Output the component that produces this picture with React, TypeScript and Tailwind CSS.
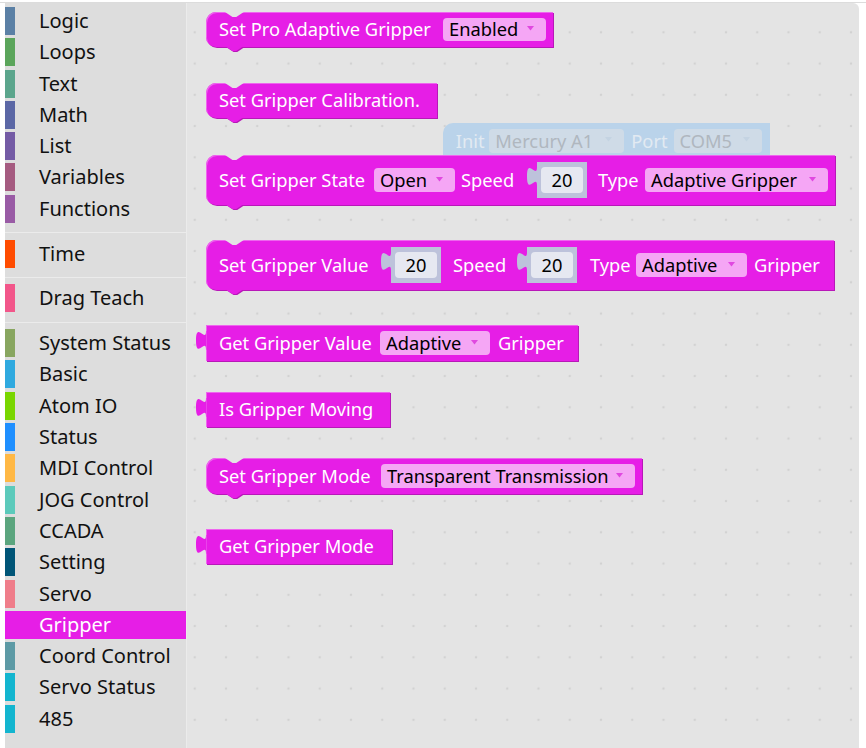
import React from "react";

type Item = { name: string; bar: string; selected?: boolean };

const sections: Item[][] = [
  [
    { name: "Logic", bar: "bg-[#5b80a5]" },
    { name: "Loops", bar: "bg-[#5ba55b]" },
    { name: "Text", bar: "bg-[#5ba58c]" },
    { name: "Math", bar: "bg-[#5b67a5]" },
    { name: "List", bar: "bg-[#745ba5]" },
    { name: "Variables", bar: "bg-[#a55b80]" },
    { name: "Functions", bar: "bg-[#995ba5]" },
  ],
  [{ name: "Time", bar: "bg-[#ff4c00]" }],
  [{ name: "Drag Teach", bar: "bg-[#f2568a]" }],
  [
    { name: "System Status", bar: "bg-[#88a660]" },
    { name: "Basic", bar: "bg-[#2fa9df]" },
    { name: "Atom IO", bar: "bg-[#79d600]" },
    { name: "Status", bar: "bg-[#1f8fff]" },
    { name: "MDI Control", bar: "bg-[#ffb845]" },
    { name: "JOG Control", bar: "bg-[#5ccabb]" },
    { name: "CCADA", bar: "bg-[#5ba57e]" },
    { name: "Setting", bar: "bg-[#005577]" },
    { name: "Servo", bar: "bg-[#ef7d8a]" },
    { name: "Gripper", bar: "bg-[#e61ee6]", selected: true },
    { name: "Coord Control", bar: "bg-[#5d9aa5]" },
    { name: "Servo Status", bar: "bg-[#13b5cf]" },
    { name: "485", bar: "bg-[#13b5cf]" },
  ],
];

function Sidebar() {
  return (
    <div className="w-[182px] shrink-0 h-full bg-[#dddddd] border-r border-[#ebebeb] pt-[4px] flex flex-col">
      {sections.map((sec, si) => (
        <div key={si} className="flex flex-col">
          {si > 0 && <div className="h-px bg-[#ebebeb] mt-[6px] mb-[6.5px]" />}
          {sec.map((it) => (
            <div
              key={it.name}
              className={`flex h-[28px] items-center mb-[3.3px] ${
                it.selected ? "bg-[#e61ee6] text-white" : "text-[#111111]"
              }`}
            >
              <div className={`w-[10px] h-full shrink-0 ${it.bar}`} />
              <span className="ml-[24px] text-[20px] leading-none whitespace-nowrap">{it.name}</span>
            </div>
          ))}
        </div>
      ))}
    </div>
  );
}

function Arrow({ color }: { color: string }) {
  return (
    <svg width="7" height="5" viewBox="0 0 7 5" className="ml-auto mr-[12px] shrink-0 -mt-[2px]">
      <path d="M0 0 L7 0 L3.5 4.5 Z" fill={color} />
    </svg>
  );
}

function Dropdown({ w, text }: { w: string; text: string }) {
  return (
    <div className={`h-[23.5px] shrink-0 rounded-[4px] bg-[#f5a6f5] flex items-center pl-[6px] ${w}`}>
      <span className="text-black whitespace-nowrap">{text}</span>
      <Arrow color="#e048e0" />
    </div>
  );
}

function Tab({ color, className }: { color: string; className: string }) {
  return (
    <svg width="10" height="19" viewBox="0 0 10 19" overflow="visible" className={`absolute ${className}`}>
      <path d="M10.5 0 L10 0 C10 12.5 0 -10 0 9.375 S10 6.25 10 18.75 L10.5 18.75 Z" fill={color} />
    </svg>
  );
}

function NumSocket({ v }: { v: string }) {
  return (
    <div className="relative w-[50px] h-[36px] shrink-0 bg-[#bdc2db] flex items-center justify-center">
      <Tab color="#bdc2db" className="-left-[10px] top-[5px]" />
      <div className="w-[42px] h-[26px] rounded-[4px] bg-[#e6e8f1] text-black flex items-center justify-center">
        {v}
      </div>
    </div>
  );
}

function Label({ w, children }: { w: string; children: React.ReactNode }) {
  return <span className={`shrink-0 whitespace-nowrap ${w}`}>{children}</span>;
}

function Block({
  className,
  kind,
  children,
}: {
  className: string;
  kind: "stmt" | "output";
  children: React.ReactNode;
}) {
  return (
    <div
      className={`relative flex items-center shrink-0 bg-[#e61ee6] text-white text-[18.3px] leading-none pl-[13px] shadow-[1px_1px_0_#b818b8,inset_1px_1px_0_#ee66ee] ${
        kind === "stmt" ? "rounded-l-[10px]" : ""
      } ${className}`}
    >
      {kind === "stmt" ? (
        <>
          <svg width="19" height="6" viewBox="0 0 19 6" className="absolute left-[18.75px] top-0">
            <path d="M0 0 L7.5 5 L11.25 5 L18.75 0 Z" fill="#e4e4e4" />
          </svg>
          <svg width="21" height="8" viewBox="0 0 21 8" overflow="visible" className="absolute left-[18.75px] top-[calc(100%-1px)]">
            <path d="M1 1 L8.5 6 L12.25 6 L19.75 1 Z" fill="#b818b8" />
            <path d="M0 0 L7.5 5 L11.25 5 L18.75 0 Z" fill="#e61ee6" />
          </svg>
        </>
      ) : (
        <Tab color="#e61ee6" className="-left-[10px] top-[6.25px]" />
      )}
      {children}
    </div>
  );
}

function Ghost() {
  return (
    <div className="absolute left-[255.7px] top-[120.3px] w-[327px] h-[35px] rounded-tl-[10px] bg-[#bad3ea] flex items-center pl-[13px] text-[18.3px] leading-none text-[#e2eaf2]">
      <Label w="w-[33.6px]">Init</Label>
      <div className="w-[135px] h-[23.5px] shrink-0 rounded-[4px] bg-[#cfdbe7] flex items-center pl-[6px]">
        <span className="text-[#b0b7bf] whitespace-nowrap">Mercury A1</span>
        <Arrow color="#c4d3e2" />
      </div>
      <Label w="w-[49.3px] pl-[7px]">Port</Label>
      <div className="w-[88.4px] h-[23.5px] shrink-0 rounded-[4px] bg-[#cfdbe7] flex items-center pl-[6px]">
        <span className="text-[#b0b7bf] whitespace-nowrap">COM5</span>
        <Arrow color="#c4d3e2" />
      </div>
    </div>
  );
}

function Workspace() {
  return (
    <div className="relative w-[672px] shrink-0 h-full rounded-tr-[6px] bg-[#e4e4e4] bg-[image:radial-gradient(circle,#d2d2d2_1px,transparent_1.6px)] bg-[length:31.25px_31.25px] bg-[position:-7.9px_13.7px]">
      <Ghost />
      <div className="flex flex-col items-start pl-[19px]">
        <Block kind="stmt" className="mt-[9px] w-[347px] h-[35px]">
          <Label w="w-[224px]">Set Pro Adaptive Gripper</Label>
          <Dropdown w="w-[103px]" text="Enabled" />
        </Block>

        <Block kind="stmt" className="mt-[36px] w-[231px] h-[35px]">
          <Label w="">Set Gripper Calibration.</Label>
        </Block>

        <Block kind="stmt" className="mt-[37px] w-[629px] h-[50px]">
          <Label w="w-[155px]">Set Gripper State</Label>
          <Dropdown w="w-[81px]" text="Open" />
          <Label w="w-[82px] pl-[6px]">Speed</Label>
          <NumSocket v="20" />
          <Label w="w-[58px] pl-[11px]">Type</Label>
          <Dropdown w="w-[183px]" text="Adaptive Gripper" />
        </Block>

        <Block kind="stmt" className="mt-[35px] w-[628px] h-[50px]">
          <Label w="w-[172px]">Set Gripper Value</Label>
          <NumSocket v="20" />
          <Label w="w-[86px] pl-[12px]">Speed</Label>
          <NumSocket v="20" />
          <Label w="w-[59px] pl-[13px]">Type</Label>
          <Dropdown w="w-[111px]" text="Adaptive" />
          <Label w="pl-[7px]">Gripper</Label>
        </Block>

        <Block kind="output" className="mt-[35px] w-[372px] h-[36px]">
          <Label w="w-[161px]">Get Gripper Value</Label>
          <Dropdown w="w-[110px]" text="Adaptive" />
          <Label w="pl-[8px]">Gripper</Label>
        </Block>

        <Block kind="output" className="mt-[31px] w-[184px] h-[35px]">
          <Label w="">Is Gripper Moving</Label>
        </Block>

        <Block kind="stmt" className="mt-[31px] w-[436px] h-[36px]">
          <Label w="w-[162px]">Set Gripper Mode</Label>
          <Dropdown w="w-[254px]" text="Transparent Transmission" />
        </Block>

        <Block kind="output" className="mt-[35px] w-[186px] h-[35px]">
          <Label w="">Get Gripper Mode</Label>
        </Block>
      </div>
    </div>
  );
}

export default function App() {
  return (
    <div className="w-[866px] h-[748px] overflow-hidden bg-white pt-[2px] font-['Noto_Sans',sans-serif]">
      <div className="flex h-[746px] border-t border-[#dcdcdc] pl-[5px]">
        <Sidebar />
        <Workspace />
      </div>
    </div>
  );
}
